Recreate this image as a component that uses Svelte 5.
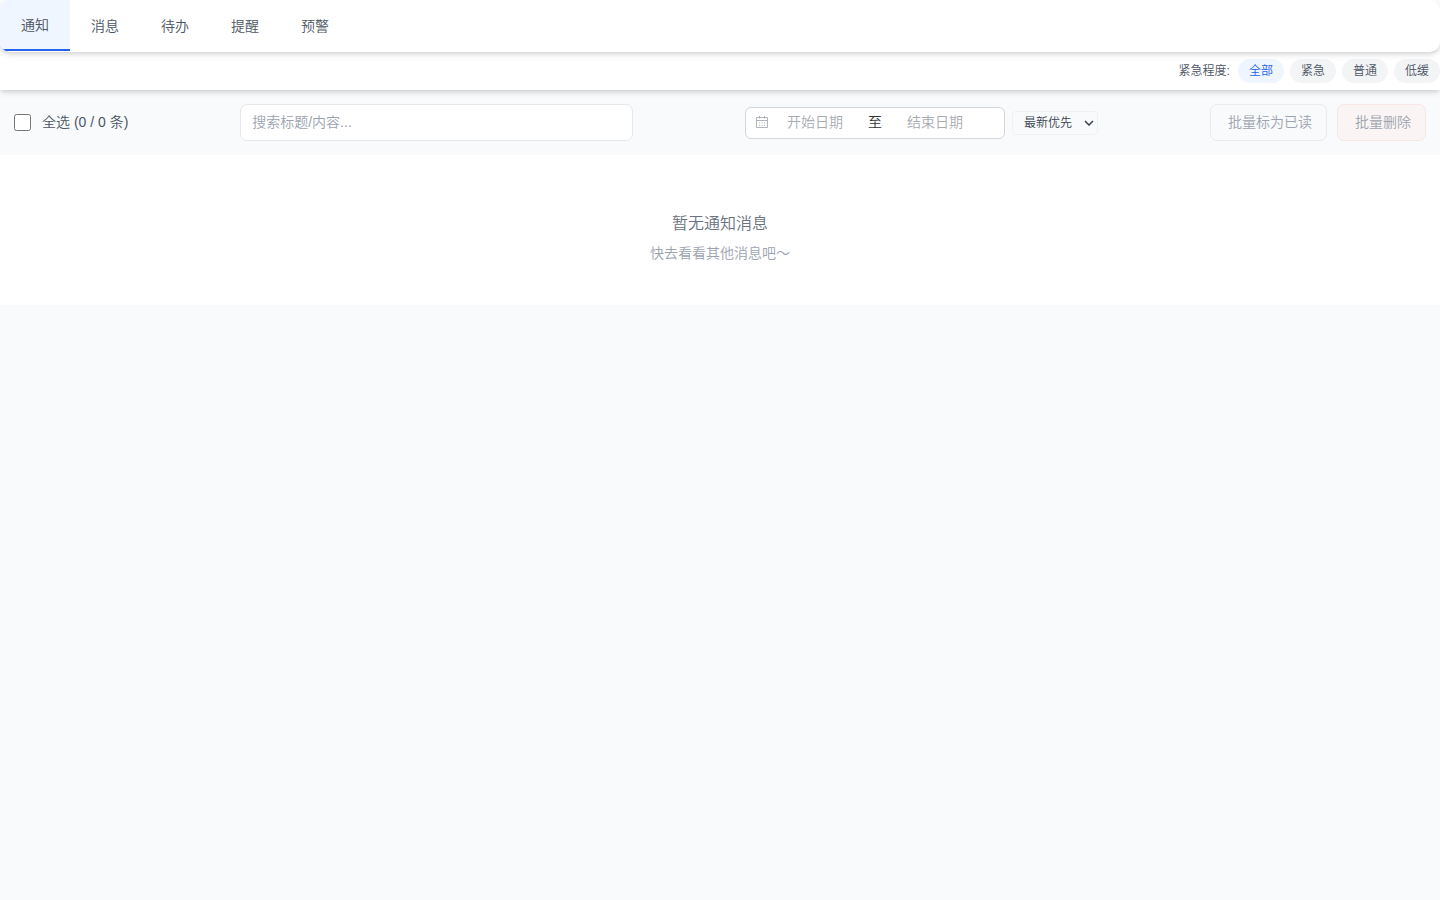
<script lang="ts">
  const tabs = ['通知', '消息', '待办', '提醒', '预警'];
  const levels = ['全部', '紧急', '普通', '低缓'];

  let activeTab = $state('通知');
  let level = $state('全部');
  let keyword = $state('');
  let startDate = $state('');
  let endDate = $state('');
  let sort = $state('desc');
  let allChecked = $state(false);

  let messages: { id: number; title: string }[] = $state([]);
  const selectedCount = $derived(allChecked ? messages.length : 0);
</script>

<div class="message-center">
  <nav class="tabs">
    {#each tabs as tab (tab)}
      <button type="button" class="tab" class:active={activeTab === tab} onclick={() => (activeTab = tab)}>{tab}</button>
    {/each}
  </nav>

  <div class="levels">
    <span class="levels-label">紧急程度:</span>
    {#each levels as item (item)}
      <button type="button" class="level" class:active={level === item} onclick={() => (level = item)}>{item}</button>
    {/each}
  </div>

  <div class="toolbar">
    <label class="select-all">
      <input type="checkbox" bind:checked={allChecked} />
      <span>全选 ({selectedCount} / {messages.length} 条)</span>
    </label>

    <input class="search" type="text" placeholder="搜索标题/内容..." aria-label="搜索标题/内容" bind:value={keyword} />

    <div class="filters">
      <div class="date-range">
        <svg viewBox="0 0 14 14" width="14" height="14" aria-hidden="true">
          <path
            d="M1.5 2.5h11v10h-11zM1.5 5.5h11M4.5 1v2.5M9.5 1v2.5M4 8h1M6.500 8h1M9 8h1M4 10.500h1M6.500 10.500h1M9 10.500h1"
            fill="none"
            stroke="currentColor"
            stroke-width="0.9"
          />
        </svg>
        <input type="text" placeholder="开始日期" aria-label="开始日期" bind:value={startDate} />
        <span class="to">至</span>
        <input type="text" placeholder="结束日期" aria-label="结束日期" bind:value={endDate} />
      </div>
      <span class="sort-box">
        <select class="sort" aria-label="排序" bind:value={sort}>
          <option value="desc">最新优先</option>
          <option value="asc">最早优先</option>
        </select>
        <svg viewBox="0 0 10 6" width="10" height="6" aria-hidden="true">
          <path d="M1 1l4 4 4-4" fill="none" stroke="currentColor" stroke-width="1.5" />
        </svg>
      </span>
    </div>

    <div class="actions">
      <button type="button" class="btn" disabled={selectedCount === 0}>批量标为已读</button>
      <button type="button" class="btn danger" disabled={selectedCount === 0}>批量删除</button>
    </div>
  </div>

  {#if messages.length === 0}
    <div class="empty">
      <p class="empty-title">暂无{activeTab}消息</p>
      <p class="empty-tip">快去看看其他消息吧～</p>
    </div>
  {/if}
</div>

<style>
  :global(body) { background: #f9fafc; }
  .message-center {
    font-family: "Liberation Sans", "Noto Sans CJK SC", sans-serif;
    font-size: 14px; font-weight: 350; line-height: 20px; color: #4b5563;
  }
  button, input, select { font: inherit; color: inherit; margin: 0; box-sizing: border-box; }
  button { cursor: pointer; }

  .tabs {
    display: flex; position: relative; z-index: 2; height: 52px;
    background: #fff; border-radius: 10px; overflow: hidden;
    box-shadow: 0 4px 6px -1px rgba(0, 0, 0, 0.1), 0 2px 4px -1px rgba(0, 0, 0, 0.1);
  }
  .tab { border: 0; background: none; padding: 0 21px; }
  .tab.active { height: 51px; background: #eff6ff; border-bottom: 2px solid #2563eb; }

  .levels {
    display: flex; align-items: center; justify-content: flex-end; gap: 6px;
    position: relative; z-index: 1; height: 38px; background: #fff;
    font-size: 12px; line-height: 16px;
    box-shadow: 0 4px 6px -1px rgba(0, 0, 0, 0.1), 0 2px 4px -1px rgba(0, 0, 0, 0.1);
  }
  .levels-label { margin-right: 2px; }
  .level { border: 0; border-radius: 999px; padding: 4px 11px; background: #f3f4f6; }
  .level.active { background: #eff6ff; color: #2563eb; }

  .toolbar {
    display: flex; align-items: center; justify-content: space-between;
    padding: 14px; background: #f8fafc;
  }
  .select-all { display: flex; align-items: center; gap: 11px; padding-bottom: 1px; white-space: nowrap; }
  .select-all input { width: 17px; height: 17px; }
  .search {
    flex: 0 1 393px; min-width: 120px; height: 37px; padding: 0 11px 2px;
    border: 1px solid #e5e7eb; border-radius: 7px; background: #fff; outline: none;
  }
  .search::placeholder { color: #9ca3af; opacity: 1; }

  .filters { display: flex; align-items: center; gap: 7px; }
  .date-range {
    display: flex; align-items: center; box-sizing: border-box; width: 260px; height: 32px;
    padding: 0 9px 2px; border: 1px solid #d3d7de; border-radius: 6px; background: #fff;
  }
  .date-range svg { flex: none; color: #a8abb2; }
  .date-range input {
    flex: 1; min-width: 0; border: 0; padding: 0; background: none;
    text-align: center; outline: none;
  }
  .date-range input::placeholder { color: #a8abb2; opacity: 1; }
  .date-range input:last-child { margin-right: 14px; }
  .to { padding: 0 7px; color: #303133; }
  .sort-box { display: grid; align-items: center; color: #374151; }
  .sort-box > * { grid-area: 1 / 1; }
  .sort-box svg { justify-self: end; margin-right: 4px; pointer-events: none; }
  .sort {
    appearance: none; height: 24px; padding: 0 24px 0 11px;
    border: 1px solid #eff1f3; border-radius: 4px; background: #f9fafb; font-size: 12px;
  }

  .actions { display: flex; gap: 10px; }
  .btn {
    height: 37px; padding: 0 14px 2px 17px; border: 1px solid #e8eaee; border-radius: 7px;
    background: #f9fafb; color: #9ca3af; white-space: nowrap;
  }
  .btn.danger { border-color: #f8e6e4; background: #faf5f4; }
  .btn:disabled { cursor: not-allowed; }

  .empty { background: #fff; padding: 57px 0 42px; text-align: center; }
  .empty p { margin: 0; }
  .empty-title { font-size: 16px; line-height: 24px; color: #6b7280; }
  .empty .empty-tip { margin-top: 7px; color: #9ca3af; }
</style>
